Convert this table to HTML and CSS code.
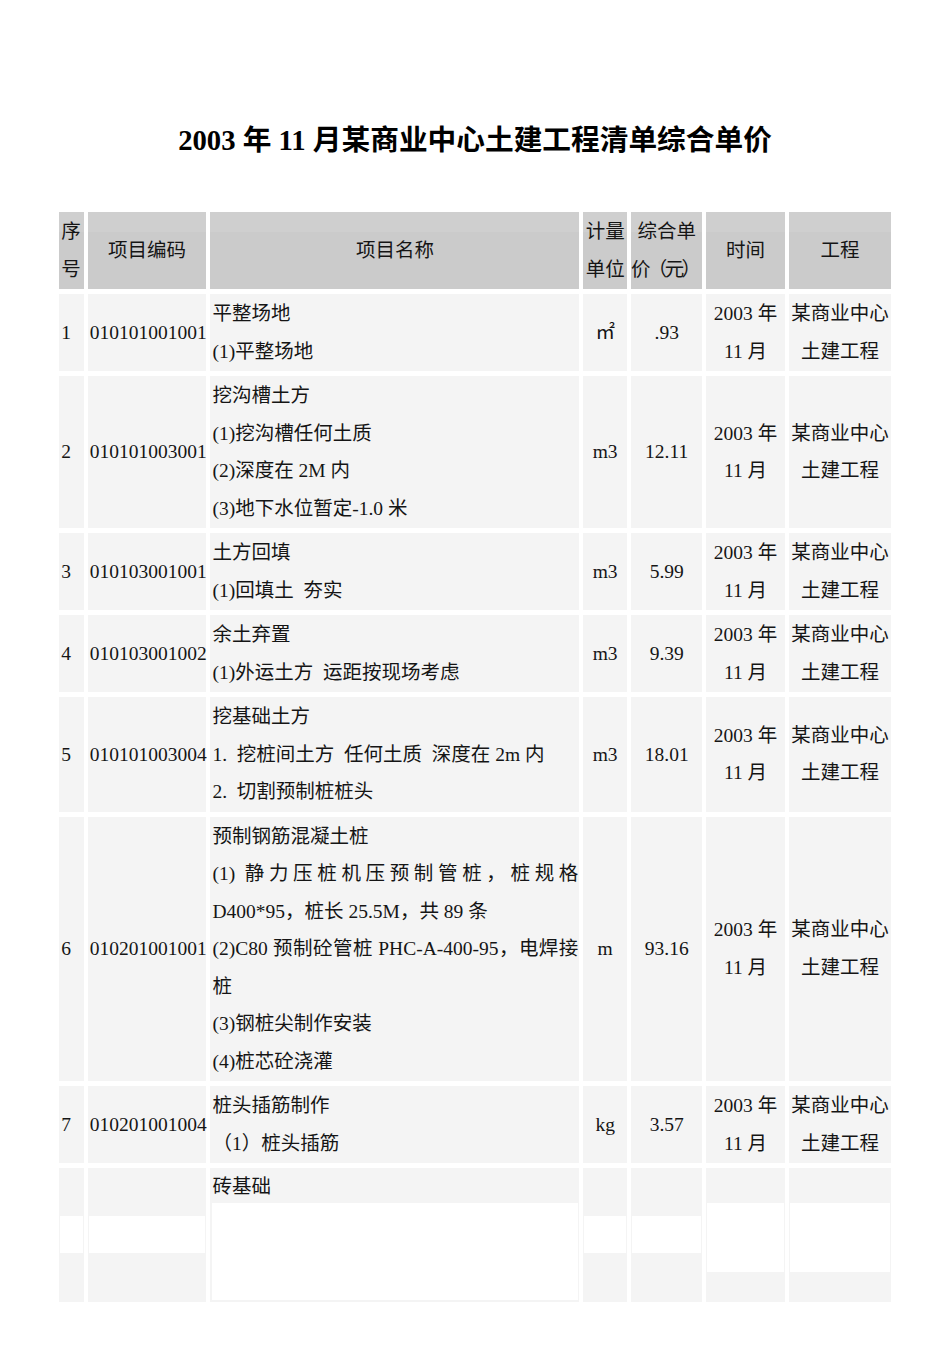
FILE: index.html
```html
<!DOCTYPE html>
<html lang="zh-CN">
<head>
<meta charset="utf-8">
<title>2003年11月某商业中心土建工程清单综合单价</title>
<link rel="stylesheet" href="styles.css">
</head>
<body>
<div class="page">
  <h1 class="title">2003 年 11 月某商业中心土建工程清单综合单价</h1>
  <table class="bill">
    <colgroup>
      <col class="c-no"><col class="c-code"><col class="c-name"><col class="c-unit"><col class="c-price"><col class="c-time"><col class="c-proj">
    </colgroup>
    <thead>
      <tr>
        <th class="left">序<br>号</th>
        <th>项目编码</th>
        <th>项目名称</th>
        <th>计量<br>单位</th>
        <th><span class="nw">综合单</span><br><span class="nw tight">价（元）</span></th>
        <th>时间</th>
        <th>工程</th>
      </tr>
    </thead>
    <tbody>
      <tr>
        <td>1</td><td>010101001001</td>
        <td class="name">平整场地<br>(1)平整场地</td>
        <td class="ctr">㎡</td><td class="ctr">.93</td>
        <td class="ctr">2003 年<br>11 月</td><td class="ctr">某商业中心<br>土建工程</td>
      </tr>
      <tr>
        <td>2</td><td>010101003001</td>
        <td class="name">挖沟槽土方<br>(1)挖沟槽任何土质<br>(2)深度在 2M 内<br>(3)地下水位暂定-1.0 米</td>
        <td class="ctr">m3</td><td class="ctr">12.11</td>
        <td class="ctr">2003 年<br>11 月</td><td class="ctr">某商业中心<br>土建工程</td>
      </tr>
      <tr>
        <td>3</td><td>010103001001</td>
        <td class="name">土方回填<br>(1)回填土&nbsp; 夯实</td>
        <td class="ctr">m3</td><td class="ctr">5.99</td>
        <td class="ctr">2003 年<br>11 月</td><td class="ctr">某商业中心<br>土建工程</td>
      </tr>
      <tr>
        <td>4</td><td>010103001002</td>
        <td class="name">余土弃置<br>(1)外运土方&nbsp; 运距按现场考虑</td>
        <td class="ctr">m3</td><td class="ctr">9.39</td>
        <td class="ctr">2003 年<br>11 月</td><td class="ctr">某商业中心<br>土建工程</td>
      </tr>
      <tr>
        <td>5</td><td>010101003004</td>
        <td class="name">挖基础土方<br>1.&nbsp; 挖桩间土方&nbsp; 任何土质&nbsp; 深度在 2m 内<br>2.&nbsp; 切割预制桩桩头</td>
        <td class="ctr">m3</td><td class="ctr">18.01</td>
        <td class="ctr">2003 年<br>11 月</td><td class="ctr">某商业中心<br>土建工程</td>
      </tr>
      <tr>
        <td>6</td><td>010201001001</td>
        <td class="name"><div>预制钢筋混凝土桩</div><div class="just">(1) 静力压桩机压预制管桩，桩规格 D400*95，桩长 25.5M，共 89 条</div><div class="just">(2)C80 预制砼管桩 PHC-A-400-95，电焊接桩</div><div>(3)钢桩尖制作安装</div><div>(4)桩芯砼浇灌</div></td>
        <td class="ctr">m</td><td class="ctr">93.16</td>
        <td class="ctr">2003 年<br>11 月</td><td class="ctr">某商业中心<br>土建工程</td>
      </tr>
      <tr>
        <td>7</td><td>010201001004</td>
        <td class="name">桩头插筋制作<br>（1）桩头插筋</td>
        <td class="ctr">kg</td><td class="ctr">3.57</td>
        <td class="ctr">2003 年<br>11 月</td><td class="ctr">某商业中心<br>土建工程</td>
      </tr>
      <tr class="cut">
        <td><div class="blank-low"></div></td>
        <td><div class="blank-low"></div></td>
        <td class="name"><div class="cut-line">砖基础</div><div class="blank-name"></div></td>
        <td><div class="blank-low"></div></td>
        <td><div class="blank-low"></div></td>
        <td><div class="blank-high"></div></td>
        <td><div class="blank-high"></div></td>
      </tr>
    </tbody>
  </table>
</div>
</body>
</html>
```

FILE: styles.css
```css
html, body {
  margin: 0;
  padding: 0;
  background: #ffffff;
}

body {
  font-family: "Liberation Serif", "Noto Sans CJK SC", serif;
  color: #151515;
}

.page {
  width: 950px;
  padding-top: 119px;
}

.title {
  margin: 0;
  text-align: center;
  font-size: 28.7px;
  line-height: 42px;
  font-weight: bold;
  color: #000000;
}

.bill {
  margin-top: 46px;
  margin-left: 55.3px;
  width: 840px;
  table-layout: fixed;
  border-collapse: separate;
  border-spacing: 4.7px 5px;
  font-size: 19.5px;
}

.c-no { width: 24.3px; }
.c-code { width: 118px; }
.c-name { width: 366.5px; }
.c-unit { width: 43.4px; }
.c-price { width: 71px; }
.c-time { width: 77.7px; }
.c-proj { width: 102px; }

.bill th {
  background: linear-gradient(#cfcfcf 0, #cfcfcf 20px, #cbcbcb 20px);
  font-weight: normal;
  line-height: 37.5px;
  padding: 1px 0;
  text-align: center;
  vertical-align: middle;
  overflow: visible;
}

.bill th.left {
  text-align: left;
  padding-left: 2px;
}

.nw {
  white-space: nowrap;
}

.tight {
  letter-spacing: -2.6px;
  margin-left: -4px;
}

.bill td {
  background: #f4f4f4;
  line-height: 37.5px;
  padding: 1px 0 1px 2px;
  vertical-align: middle;
  white-space: nowrap;
}

.bill td.name {
  white-space: normal;
  padding: 1px 1px 1px 2px;
}

.bill td.ctr {
  text-align: center;
  padding-left: 0;
}

.just {
  text-align: justify;
  text-align-last: left;
}

.cut td {
  height: 133.6px;
  padding: 0;
  vertical-align: top;
}

.cut td.name {
  padding: 0;
}

.cut-line {
  height: 35.3px;
  line-height: 38px;
  padding-left: 2px;
}

.blank-low {
  margin: 48.3px 1px 0 1px;
  height: 36.7px;
  background: #ffffff;
}

.blank-high {
  margin: 35.3px 1px 0 1px;
  height: 69px;
  background: #ffffff;
}

.blank-name {
  margin: 0 1.7px 0 2px;
  height: 96.7px;
  background: #ffffff;
}
```
